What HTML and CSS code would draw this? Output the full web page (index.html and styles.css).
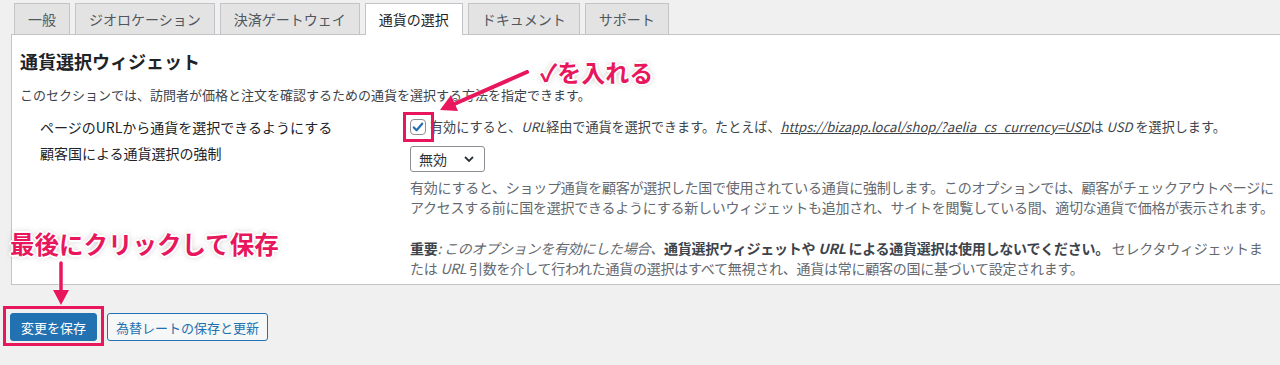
FILE: index.html
```html
<!DOCTYPE html>
<html lang="ja">
<head>
    <meta charset="UTF-8">
    <meta name="viewport" content="width=device-width, initial-scale=1.0">
    <title>通貨の選択</title>
    <link rel="stylesheet" href="styles.css">
</head>
<body>
    <div class="page">
        <nav class="tabs">
            <a class="tab">一般</a>
            <a class="tab">ジオロケーション</a>
            <a class="tab">決済ゲートウェイ</a>
            <a class="tab active">通貨の選択</a>
            <a class="tab">ドキュメント</a>
            <a class="tab">サポート</a>
        </nav>

        <section class="panel">
            <h2>通貨選択ウィジェット</h2>
            <p class="intro">このセクションでは、訪問者が価格と注文を確認するための通貨を選択する方法を指定できます。</p>

            <div class="row row-first">
                <div class="label">ページのURLから通貨を選択できるようにする</div>
                <div class="field inline">
                    <span class="checkbox">
                        <svg width="14" height="14" viewBox="0 0 14 14"><path d="M2.8 7.4l2.8 2.9 5.6-6.6" fill="none" stroke="#2271b1" stroke-width="2.2" stroke-linecap="round" stroke-linejoin="round"/></svg>
                    </span>
                    <span class="check-text">有効にすると、<i>URL</i>経由で通貨を選択できます。たとえば、<a class="link">https://bizapp.local/shop/?aelia_cs_currency=USD</a>は <i>USD</i> を選択します。</span>
                </div>
            </div>

            <div class="row">
                <div class="label">顧客国による通貨選択の強制</div>
                <div class="field">
                    <div class="select">
                        <span>無効</span>
                        <svg width="14" height="14" viewBox="0 0 14 14"><path d="M3 5l4 4 4-4" fill="none" stroke="#2c3338" stroke-width="1.8"/></svg>
                    </div>
                    <p class="desc">有効にすると、ショップ通貨を顧客が選択した国で使用されている通貨に強制します。このオプションでは、顧客がチェックアウトページに<br>アクセスする前に国を選択できるようにする新しいウィジェットも追加され、サイトを閲覧している間、適切な通貨で価格が表示されます。</p>
                    <p class="desc"><b>重要</b><i>: このオプションを有効にした場合、</i><b>通貨選択ウィジェットや <i>URL</i> による通貨選択は使用しないでください。</b> セレクタウィジェットま<br>たは <i>URL</i> 引数を介して行われた通貨の選択はすべて無視され、通貨は常に顧客の国に基づいて設定されます。</p>
                </div>
            </div>
        </section>

        <div class="actions">
            <button class="button primary">変更を保存</button>
            <button class="button secondary">為替レートの保存と更新</button>
        </div>

        <!-- annotations -->
        <div class="note note-check">✓を入れる</div>
        <div class="note note-save">最後にクリックして保存</div>
        <div class="mark mark-check"></div>
        <div class="mark mark-save"></div>
        <svg class="arrows" width="1280" height="365" viewBox="0 0 1280 365">
            <line x1="527" y1="72" x2="452" y2="105" stroke="#e8175d" stroke-width="4" stroke-linecap="round"/>
            <polygon points="440,110 458,111 451,95" fill="#e8175d"/>
            <line x1="61" y1="263" x2="61" y2="292" stroke="#e8175d" stroke-width="3.5" stroke-linecap="round"/>
            <polygon points="61,305 53,290 69,290" fill="#e8175d"/>
        </svg>
    </div>
</body>
</html>
```

FILE: styles.css
```css
body {
    margin: 0;
    background-color: #f0f0f1;
    color: #3c434a;
    font-family: "Noto Sans CJK JP", "Liberation Sans", sans-serif;
    font-size: 13px;
}

.page {
    position: relative;
    width: 1280px;
    height: 365px;
    overflow: hidden;
    padding-top: 3px;
    box-sizing: border-box;
}

.tabs {
    display: flex;
    gap: 5px;
    padding-left: 14px;
}

.tab {
    position: relative;
    display: block;
    height: 30px;
    line-height: 30px;
    padding: 0 13px;
    font-size: 14px;
    color: #50575e;
    background-color: #e3e3e4;
    border: 1px solid #c3c4c7;
    border-bottom: none;
    margin-bottom: -1px;
}

.tab.active {
    background-color: #fff;
    color: #1d2327;
    height: 31px;
    z-index: 1;
}

.panel {
    margin-left: 11px;
    background-color: #fff;
    border: 1px solid #c3c4c7;
    border-right: none;
    padding: 14px 0 6px 8px;
}

h2 {
    margin: 0;
    font-size: 18px;
    line-height: 24px;
    font-weight: 700;
    color: #1d2327;
}

.intro {
    margin: 12px 0 0;
    line-height: 20px;
}

.row {
    display: grid;
    grid-template-columns: 370px 1fr;
    padding-left: 20px;
    font-size: 14px;
    line-height: 20px;
}

.row-first {
    margin-top: 12px;
    margin-bottom: 6px;
}

.label {
    color: #1d2327;
}

.field.inline {
    display: flex;
    align-items: center;
    gap: 4px;
}

.checkbox {
    display: flex;
    align-items: center;
    justify-content: center;
    width: 14px;
    height: 14px;
    border: 1px solid #8c8f94;
    border-radius: 4px;
    background-color: #fff;
}

.check-text {
    color: #3c434a;
    font-size: 13.1px;
    white-space: nowrap;
}

.link {
    font-style: italic;
    text-decoration: underline;
    color: #3c434a;
}

.select {
    display: flex;
    align-items: center;
    justify-content: space-between;
    width: 57px;
    height: 24px;
    margin-top: 3px;
    padding: 0 8px;
    border: 1px solid #8c8f94;
    border-radius: 3px;
    background-color: #fff;
    color: #2c3338;
}

.desc {
    margin: 5px 0 0;
    color: #646970;
    letter-spacing: -0.25px;
    white-space: nowrap;
}

.desc + .desc {
    margin-top: 21px;
}

.desc b {
    color: #3c434a;
}

.actions {
    display: flex;
    gap: 10px;
    padding-left: 10px;
    margin-top: 28px;
}

.button {
    height: 28px;
    padding: 0 10px;
    font-family: inherit;
    font-size: 13px;
    border-radius: 3px;
    border: 1px solid #2271b1;
    cursor: pointer;
}

.primary {
    background-color: #2271b1;
    color: #fff;
}

.secondary {
    background-color: #f6f7f7;
    color: #2271b1;
    padding: 0 8px;
}

.note {
    position: absolute;
    font-weight: 700;
    color: #e8175d;
    line-height: 30px;
    white-space: nowrap;
    text-shadow: 1px 1px 0 #fff, -1px -1px 0 #fff, 1px -1px 0 #fff, -1px 1px 0 #fff,
        2px 0 0 #fff, -2px 0 0 #fff, 0 2px 0 #fff, 0 -2px 0 #fff, 0 0 6px rgba(0, 0, 0, 0.35);
}

.note-check {
    left: 540px;
    top: 57px;
    font-size: 24px;
}

.note-save {
    left: 10px;
    top: 229px;
    font-size: 24.5px;
}

.mark {
    position: absolute;
    border: 3px solid #e8175d;
    box-sizing: border-box;
}

.mark-check {
    left: 403px;
    top: 112px;
    width: 31px;
    height: 30px;
}

.mark-save {
    left: 3px;
    top: 306px;
    width: 101px;
    height: 40px;
}

.arrows {
    position: absolute;
    left: 0;
    top: 0;
    pointer-events: none;
    filter: drop-shadow(0 0 1px #fff);
}
```
